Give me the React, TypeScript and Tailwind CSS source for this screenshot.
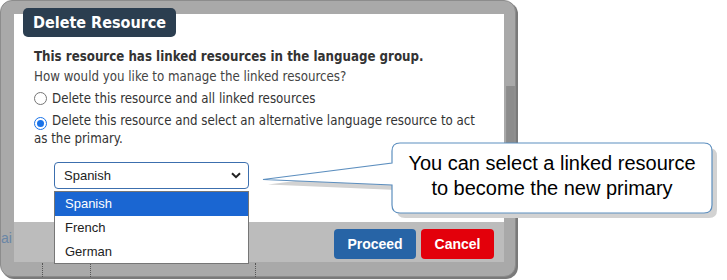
import React from "react";

const BODY_FONT = '"DejaVu Sans Condensed", "DejaVu Sans", sans-serif';
const ARIAL = '"Liberation Sans", Arial, sans-serif';

function Radio({ checked }: { checked?: boolean }) {
  return checked ? (
    <span className="mr-[5px] inline-flex h-[13px] w-[13px] shrink-0 items-center justify-center rounded-full border-[1.5px] border-[#1a73e8] bg-white align-[-2px]">
      <span className="h-[7px] w-[7px] rounded-full bg-[#1a73e8]" />
    </span>
  ) : (
    <span className="mr-[5px] inline-block h-[13px] w-[13px] shrink-0 rounded-full border border-[#767676] bg-white align-[-2px]" />
  );
}

function Callout() {
  const shape =
    "M 400 143 H 704 Q 712 143 712 151 V 205 Q 712 213 704 213 H 400 Q 392 213 392 205 V 185 L 263 179.5 L 392 163 V 151 Q 392 143 400 143 Z";
  return (
    <>
      <svg
        className="pointer-events-none absolute left-0 top-0"
        width={727}
        height={280}
        viewBox="0 0 727 280"
      >
        <path d={shape} transform="translate(5 5)" fill="#d2d2d2" />
        <path d={shape} fill="#ffffff" stroke="#5d8fbf" strokeWidth={1.2} />
      </svg>
      <div
        className="absolute left-[392px] top-[151px] w-[320px] text-center text-[20px] leading-[25px] text-black"
        style={{ fontFamily: ARIAL }}
      >
        You can select a linked resource
        <br />
        to become the new primary
      </div>
    </>
  );
}

export default function App() {
  return (
    <div className="relative h-[280px] w-[727px] overflow-hidden bg-white" style={{ fontFamily: BODY_FONT }}>
      {/* dimmed page frame with the dialog */}
      <div className="relative h-[277px] w-[516px] rounded-[12px] border border-[#8c8c8c] bg-[#a9a9a9] pl-[13px] pt-[13px] shadow-[2px_2px_0_#7a7a7a]">
        <div className="w-[490px]">
          <div className="h-[208px] bg-white pl-[20px] pr-[18px] pt-[33px] text-[13.2px] text-[#333]">
            <p className="h-[20px] font-bold leading-[20px] text-[#333]">
              This resource has linked resources in the language group.
            </p>
            <p className="h-[20px] leading-[20px] text-[#444]">How would you like to manage the linked resources?</p>
            <label className="mt-[2px] block leading-[20px] text-[#333]">
              <Radio />
              Delete this resource and all linked resources
            </label>
            <label className="mt-[3px] block leading-[18px] text-[#333]">
              <Radio checked />
              Delete this resource and select an alternative language resource to act as the primary.
            </label>
            <div
              className="ml-[20px] mt-[14px] flex h-[27px] w-[195px] items-center justify-between rounded-[4px] border border-[#3c6fae] bg-white pl-[9px] pr-[7px] text-[13px] text-[#222]"
              style={{ fontFamily: ARIAL }}
            >
              <span>Spanish</span>
              <svg width="10" height="7" viewBox="0 0 10 7">
                <path d="M1 1.2 L5 5.2 L9 1.2" fill="none" stroke="#222" strokeWidth="2" />
              </svg>
            </div>
          </div>
          <div className="flex h-[40px] justify-end gap-[5px] bg-[#bcbcbc] pr-[10px] pt-[7px]" style={{ fontFamily: ARIAL }}>
            <button className="h-[30px] w-[82px] rounded-[4px] bg-[#2764a6] text-[14px] font-bold text-white">Proceed</button>
            <button className="h-[30px] w-[73px] rounded-[4px] bg-[#e3000b] text-[14px] font-bold text-white">Cancel</button>
          </div>
        </div>

        {/* scroll strip behind the frame */}
        <div className="absolute left-[505px] top-[85px] h-[70px] w-[9px] border-x border-[#8f8f8f] bg-[#8c8c8c]" />

        {/* page text peeking out */}
        <span className="absolute left-0 top-[227px] text-[14px] text-[#6a86a6]" style={{ fontFamily: ARIAL }}>
          ai
        </span>

        {/* dotted lines below */}
        <div className="absolute left-[41px] top-[262px] h-[14px] border-l border-dotted border-[#555]" />
        <div className="absolute left-[89px] top-[262px] h-[14px] border-l border-dotted border-[#555]" />
        <div className="absolute left-[254px] top-[262px] h-[14px] border-l border-dotted border-[#555]" />
      </div>

      {/* dialog title badge */}
      <div className="absolute left-[23px] top-[8px] flex h-[29px] w-[153px] items-center rounded-[5px] bg-[#2b3e50] pl-[10px] text-[16px] font-bold text-white">
        Delete Resource
      </div>

      {/* open select list */}
      <div
        className="absolute left-[54px] top-[191px] w-[195px] border border-[#767676] bg-white text-[13px] text-[#222]"
        style={{ fontFamily: ARIAL }}
      >
        <div className="flex h-[24px] items-center bg-[#1a66d2] pl-[10px] text-white">Spanish</div>
        <div className="flex h-[24px] items-center pl-[10px]">French</div>
        <div className="flex h-[23px] items-center pl-[10px]">German</div>
      </div>

      <Callout />
    </div>
  );
}
